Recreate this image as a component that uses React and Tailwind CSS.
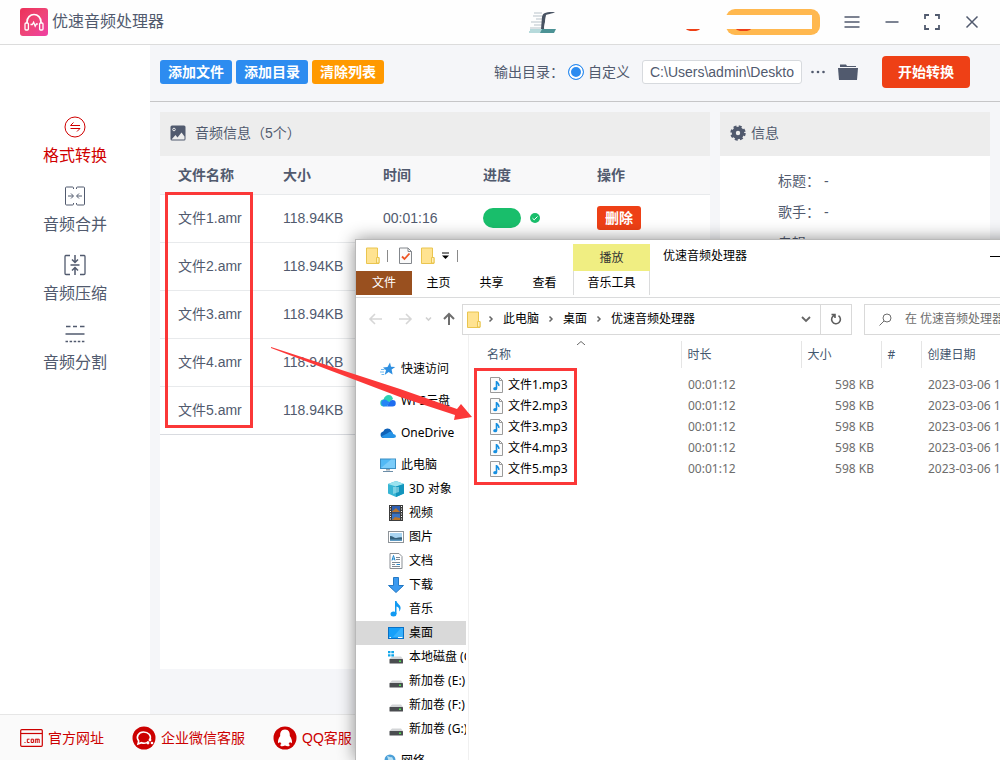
import React, { useState } from 'react';

const sideMenu = [
  { id: 'convert', label: '格式转换' },
  { id: 'merge', label: '音频合并' },
  { id: 'compress', label: '音频压缩' },
  { id: 'split', label: '音频分割' }
];

const sourceFiles = ['文件1.amr', '文件2.amr', '文件3.amr', '文件4.amr', '文件5.amr'];
const outputFiles = ['文件1.mp3', '文件2.mp3', '文件3.mp3', '文件4.mp3', '文件5.mp3'];

const navTop = [
  { icon: 'star', label: '快速访问' },
  { icon: 'wps', label: 'WPS云盘' },
  { icon: 'onedrive', label: 'OneDrive' }
];

const navPc = [
  { icon: 'cube', label: '3D 对象' },
  { icon: 'video', label: '视频' },
  { icon: 'picture', label: '图片' },
  { icon: 'document', label: '文档' },
  { icon: 'download', label: '下载' },
  { icon: 'music', label: '音乐' },
  { icon: 'desktop', label: '桌面', active: true },
  { icon: 'sysdisk', label: '本地磁盘 (C:)' },
  { icon: 'disk', label: '新加卷 (E:)' },
  { icon: 'disk', label: '新加卷 (F:)' },
  { icon: 'disk', label: '新加卷 (G:)' }
];

const AppLogo = () => (
  <svg className="size-7" viewBox="0 0 28 28" fill="none">
    <defs>
      <linearGradient id="logoBg" x1="0" y1="0" x2="1" y2="1">
        <stop offset="0" stopColor="#ec3059" />
        <stop offset="0.5" stopColor="#ee4577" />
        <stop offset="1" stopColor="#ef3fa5" />
      </linearGradient>
    </defs>
    <rect width="28" height="28" rx="3" fill="url(#logoBg)" />
    <path d="M7 15v-1a7 7.5 0 0 1 14 0v1" stroke="#fff" strokeWidth="1.7" />
    <rect x="5" y="15" width="3.4" height="7" rx="1" stroke="#fff" strokeWidth="1.3" />
    <rect x="19.6" y="15" width="3.4" height="7" rx="1" stroke="#fff" strokeWidth="1.3" />
    <path d="M10.5 16.5h1.8l1.3-2.3 1.6 4 1.2-2.2h1.4" stroke="#fff" strokeWidth="1.3" />
  </svg>
);

const SideIcon = ({ id }) => (
  <svg className="size-[22px]" viewBox="0 0 22 22" fill="none" stroke="currentColor">
    {id === 'convert' && (
      <>
        <circle cx="11" cy="11" r="10" />
        <path d="M16 9.5H6.500L9.500 6.500M6.500 12.500h9.500L13 15.500" />
      </>
    )}
    {id === 'merge' && (
      <>
        <path d="M9.500 4V3q0-1-1-1H2.500q-1 0-1 1v16q0 1 1 1h6q1 0 1-1v-1M12.500 4V3q0-1 1-1h6q1 0 1 1v16q0 1-1 1h-6q-1 0-1-1v-1" />
        <path d="M4 11h5M7 8.500 9.500 11 7 13.500M18 11h-5M15 8.500 12.500 11l2.500 2.500" />
      </>
    )}
    {id === 'compress' && (
      <>
        <path d="M6 1.500H2q-1 0-1 1v17q0 1 1 1h4M16 1.500h4q1 0 1 1v17q0 1-1 1h-4" strokeWidth="1.300" />
        <path d="M6.500 11h9M11 1v7M8 5.500l3 3 3-3M11 21v-7M8 16.500l3-3 3 3" strokeWidth="1.500" />
      </>
    )}
    {id === 'split' && (
      <>
        <path d="M2 3.500h4.500M9 3.500h4M16 3.500h4.500" strokeWidth="1.500" />
        <path d="M1.500 11h19" strokeWidth="1.500" />
        <path d="M1.500 18.500h19" strokeWidth="1.500" strokeDasharray="2.500 1.600" />
      </>
    )}
  </svg>
);

const FolderIcon = () => (
  <svg className="h-[17px] w-[14px] shrink-0" viewBox="0 0 14 17">
    <path d="M.5 1h11v9.500h1.500v6H.5z" fill="#ffe391" stroke="#eac54f" />
    <path d="M10.500 16v-5.500h2.500V16z" fill="#fff0b8" stroke="#eac54f" />
  </svg>
);

const DocCheckIcon = () => (
  <svg className="h-[17px] w-[13px]" viewBox="0 0 13 17" fill="none">
    <path d="M.5 1h8.500l3.500 3.500v12H.5z" fill="#fafafa" stroke="#83878c" />
    <path d="M9 1v3.500h3.500" stroke="#83878c" />
    <path d="m3 9.500 2.500 2.500 5-5.500" stroke="#ee5524" strokeWidth="1.800" />
  </svg>
);

const MusicFileIcon = () => (
  <svg className="h-4 w-[13px] shrink-0" viewBox="0 0 13 16" fill="none">
    <path d="M.5.500h9l3 3v12H.5z" fill="#fbfbfb" stroke="#9b9b9b" />
    <path d="M9.500.500v3h3" stroke="#9b9b9b" />
    <path d="M6.500 4v7.500M6.500 4c.3 2 3 2.200 2.300 5" stroke="#168fe0" strokeWidth="1.600" />
    <ellipse cx="5.200" cy="11.700" rx="2" ry="1.600" fill="#168fe0" />
  </svg>
);

const NavIcon = ({ name }) => (
  <svg className="size-4 shrink-0" viewBox="0 0 16 16" fill="none">
    {name === 'star' && (
      <>
        <path d="m10 1.500 1 4.200 4.300.2-3.700 2.700 1 5-4-2.500-4 3 1.400-4.900L3 6.500l4.500-.6z" fill="#2e8fe0" />
        <path d="M1 8.500h3.500M0 11h4M1.500 13.500H4" stroke="#6bb7ee" />
      </>
    )}
    {name === 'wps' && (
      <>
        <path d="M4 13.500a3.500 3.500 0 0 1-.5-7C4.300 3.500 6.500 2 8.500 2c3 0 4 2 4.500 4z" fill="#2ed3b5" />
        <path d="M4 13.500a3.600 3.600 0 0 1 0-7c3 0 4 2 5.500 3L7 13.500z" fill="#2486f5" />
        <path d="M7 13.500c1-1 2-6.500 5.500-6.500a3.200 3.200 0 0 1 0 6.500z" fill="#1f6df0" />
      </>
    )}
    {name === 'onedrive' && (
      <>
        <path d="M3.500 13a3.300 3.300 0 0 1-.3-6.500A4.600 4.600 0 0 1 11.500 6L14 11l-3 2z" fill="#0f62b8" />
        <path d="M4 13 1 11.500 8 8c1.500-2 5-1.500 5.200 1q2.800.5 2.800 2.200 0 1.800-2.500 1.800z" fill="#2592e6" />
      </>
    )}
    {name === 'pc' && (
      <>
        <rect x=".5" y="2" width="15" height="9.500" fill="#52b9f5" stroke="#3c8fc4" />
        <path d="M1 11 11 2.500h4v8.500z" fill="#7bccf9" />
        <path d="M6 12h4v1.500H6z" fill="#9aa7b1" />
        <path d="M3 14.500h10" stroke="#6b8da8" />
      </>
    )}
    {name === 'cube' && (
      <>
        <path d="m0 3 8-3 8 3v9.500L8 16l-8-3.500z" fill="#37b5d4" />
        <path d="m0 3 8-3 8 3-8 2.500z" fill="#9be3ef" />
        <path d="m8 5.500 8-2.500v9.500L8 16z" fill="#1295bd" />
        <path d="M5 6v7l6-2V6z" fill="#c1eff5" opacity=".5" />
      </>
    )}
    {name === 'video' && (
      <>
        <rect x="1" y="0" width="14" height="16" fill="#3c3c3c" />
        <rect x="4" y="1" width="8" height="6.500" fill="#2d5fb4" />
        <rect x="4" y="8.500" width="8" height="6.500" fill="#3a74c4" />
        <path d="M4 6.500 8 3l4 4H4zM4 15l3-3 5 1v2z" fill="#b9752c" />
        <path d="M2.500 1v15M13.500 1v15" stroke="#fff" strokeDasharray="1 1.500" />
      </>
    )}
    {name === 'picture' && (
      <>
        <rect x=".5" y="2.500" width="15" height="11" fill="#fff" stroke="#8e9499" />
        <rect x="2" y="4" width="12" height="8" fill="#a9d5f2" />
        <path d="M2 7c3 0 4 2 6 2s4-1 6-.5V12H2z" fill="#34607b" />
        <path d="M2 10.500h12V12H2z" fill="#5e9ac2" />
      </>
    )}
    {name === 'document' && (
      <>
        <path d="M2 .5h9L14 3.500v12H2z" fill="#fff" stroke="#8a8f94" />
        <path d="M8 4.500h4M8 6.500h4M4 9.500h8M4 11.500h3M4 13.500h8" stroke="#7b8894" />
        <path d="m4 7.500 1.500-5L7 7.500M4 6h3M8.500 11.500H12" stroke="#2189cf" />
      </>
    )}
    {name === 'download' && <path d="M5.500.500h5v8h5L8 15.500.500 8.500h5z" fill="#3b9af0" stroke="#2378c4" />}
    {name === 'music' && (
      <>
        <path d="M7 0h1.500c.5 3 5 4 4 8-.3 1.200-.8 2-1.300 2.500.5-3-.7-4.500-2.700-5v7.500H7z" fill="#119af2" />
        <ellipse cx="5.500" cy="13" rx="3" ry="2.500" fill="#119af2" />
      </>
    )}
    {name === 'desktop' && (
      <>
        <rect x=".5" y="2.500" width="15" height="11" fill="#16a0fa" stroke="#0a70c4" />
        <path d="M5 12 13 3h2v9z" fill="#36b0fc" />
        <path d="M1.500 12.500H3M10 12.500h4.500" stroke="#fff" />
      </>
    )}
    {(name === 'disk' || name === 'sysdisk') && (
      <>
        <path d="m3 8.500 1-1h9l2 2.500H1.500z" fill="#d3d5d7" />
        <rect x="1.500" y="10" width="13.500" height="4.500" rx=".5" fill="#4a4d50" />
        <rect x="11" y="11.500" width="2" height="1.500" fill="#4ee04e" />
      </>
    )}
    {name === 'sysdisk' && <path d="M0 2h2.500v2.300H0zM3.300 2H6v2.300H3.300zM0 5.200h2.500v2.300H0zM3.300 5.200H6v2.300H3.300z" fill="#12a7ea" />}
    {name === 'network' && (
      <>
        <circle cx="10" cy="7" r="5.500" fill="#4b9fd8" />
        <path d="M7 3c2 0 3 2 5 1l2 4-5 1z" fill="#b9e0f2" />
        <path d="m0 9 6-2v8l-6-1.500z" fill="#3273ad" />
      </>
    )}
  </svg>
);

const PathSep = () => (
  <svg className="h-2 w-[6px] shrink-0" viewBox="0 0 6 8" fill="none" stroke="#666" strokeWidth="1.500">
    <path d="m1.500 1.500 2.500 2.500-2.500 2.500" />
  </svg>
);

const TitleBar = () => (
  <header className="flex h-[45px] shrink-0 items-center border-b border-[#dcdcdc] bg-[#fefefe] pl-5">
    <AppLogo />
    <h1 className="ml-1 text-base">优速音频处理器</h1>
    <div className="ml-auto flex items-center">
      <svg className="h-6 w-[30px]" viewBox="0 0 30 24" fill="none">
        <path d="M6 3h8M5 6h9M8 9h6M3 12h11M6 15h8M2 18h11" stroke="#b8c2c9" />
        <path d="M14 7c1-5 5-5 13-5-3 2-8 2-9 3l-2 14h-3z" fill="#485362" />
        <path d="M18 6h12v12H16z" fill="#fefefe" />
        <path d="M2 20h24M1 22h25" stroke="#6fb5b8" />
        <path d="M14 19h14l-2 4H12z" fill="#4c9295" />
      </svg>
      <svg className="ml-[126px] h-[26px] w-[136px]" viewBox="0 0 136 26">
        <path d="M1 19h16q-2 3-5 3H6q-3 0-5-3z" fill="#ee4016" />
        <rect x="42" width="94" height="26" rx="9" fill="#ffb84f" />
        <path d="M51 19h17q-2 3-5 3h-7q-3 0-5-3z" fill="#ee4016" />
        <path d="M0 6h128v14H0z" fill="#fefefe" />
      </svg>
    </div>
    <div className="ml-3 mr-2 flex">
      <button aria-label="菜单" className="grid size-10 place-items-center">
        <svg className="size-4" viewBox="0 0 16 16" stroke="currentColor" strokeWidth="1.400"><path d="M.5 3h15M.5 8h15M.5 13h15" /></svg>
      </button>
      <button aria-label="最小化" className="grid size-10 place-items-center">
        <svg className="size-4" viewBox="0 0 16 16" stroke="currentColor" strokeWidth="1.500"><path d="M1.500 8h13" /></svg>
      </button>
      <button aria-label="最大化" className="grid size-10 place-items-center">
        <svg className="size-4" viewBox="0 0 16 16" fill="none" stroke="currentColor" strokeWidth="1.800"><path d="M1 5V1h4M11 1h4v4M15 11v4h-4M5 15H1v-4" /></svg>
      </button>
      <button aria-label="关闭" className="grid size-10 place-items-center">
        <svg className="size-4" viewBox="0 0 16 16" stroke="currentColor" strokeWidth="1.500"><path d="m2.500 2.500 11 11M13.500 2.500l-11 11" /></svg>
      </button>
    </div>
  </header>
);

const Sidebar = ({ current, onSelect }) => (
  <nav className="flex w-[150px] shrink-0 flex-col items-center gap-[17px] bg-white pt-[71px]">
    {sideMenu.map((item) => (
      <button
        key={item.id}
        onClick={() => onSelect(item.id)}
        className={`flex flex-col items-center gap-[6px] text-base leading-6 ${current === item.id ? 'text-[#d00000]' : ''}`}
      >
        <SideIcon id={item.id} />
        {item.label}
      </button>
    ))}
  </nav>
);

const Toolbar = () => (
  <div className="flex h-[57px] shrink-0 items-center border-b border-[#c6c6c8] pb-[2px] pl-[10px] pr-[30px] text-sm">
    <div className="flex gap-1 font-bold leading-6 text-white">
      <button className="rounded-[3px] bg-[#2d8cf0] px-2">添加文件</button>
      <button className="rounded-[3px] bg-[#2d8cf0] px-2">添加目录</button>
      <button className="rounded-[3px] bg-[#ff9900] px-2">清除列表</button>
    </div>
    <span className="ml-auto">输出目录：</span>
    <label className="ml-1 flex items-center gap-1">
      <input
        type="radio"
        name="output"
        defaultChecked
        className="size-4 appearance-none rounded-full border border-[#2d8cf0] bg-[#2d8cf0] ring-2 ring-inset ring-white"
      />
      自定义
    </label>
    <input
      type="text"
      aria-label="输出目录"
      defaultValue="C:\Users\admin\Deskto"
      className="ml-3 h-6 w-40 rounded-[3px] border border-[#d7dade] bg-white px-[7px]"
    />
    <button aria-label="更多" className="ml-2">
      <svg className="size-4" viewBox="0 0 16 16" fill="currentColor"><circle cx="2.500" cy="8" r="1.300" /><circle cx="8" cy="8" r="1.300" /><circle cx="13.500" cy="8" r="1.300" /></svg>
    </button>
    <button aria-label="打开目录" className="ml-3">
      <svg className="h-[18px] w-5" viewBox="0 0 20 18" fill="currentColor">
        <path d="M2 4V1.500h6l1 1.500h9V4z" />
        <path d="M0 5h20l-1 12H1z" />
      </svg>
    </button>
    <button className="ml-6 h-8 w-[88px] rounded bg-[#ee4016] font-bold text-white">开始转换</button>
  </div>
);

const SourcePanel = () => (
  <section className="min-w-0 flex-1 bg-white">
    <h2 className="flex h-11 items-center gap-[9px] bg-[#ededed] pb-[2px] pl-[10px] text-sm">
      <svg className="size-4" viewBox="0 0 16 16">
        <rect x=".5" y=".5" width="15" height="15" rx="1.500" fill="#515a6e" />
        <circle cx="4" cy="4.500" r="1.300" fill="none" stroke="#ededed" />
        <path d="m1.500 14.500 4-4.500 2 2.500 4-5 3 4v3z" fill="#ededed" />
      </svg>
      音频信息（5个）
    </h2>
    <table className="w-full table-fixed text-left text-sm">
      <thead>
        <tr className="h-[38px] border-b border-[#e8eaec] bg-[#f8f8f9]">
          <th className="w-[105px] pl-[18px]">文件名称</th>
          <th className="w-[100px] pl-[18px]">大小</th>
          <th className="w-[100px] pl-[18px]">时间</th>
          <th className="w-[114px] pl-[18px]">进度</th>
          <th className="pl-[18px]">操作</th>
        </tr>
      </thead>
      <tbody>
        {sourceFiles.map((name) => (
          <tr key={name} className="h-12 border-b border-[#e8eaec] last:border-[#d9dbe0]">
            <td className="pl-[18px]">{name}</td>
            <td className="pl-[18px]">118.94KB</td>
            <td className="pl-[18px]">00:01:16</td>
            <td className="pl-[18px]">
              <div className="flex items-center gap-[9px]">
                <span className="h-5 w-[38px] rounded-full bg-[#19be6b]" />
                <svg className="size-[10px]" viewBox="0 0 10 10" fill="none">
                  <circle cx="5" cy="5" r="5" fill="#19be6b" />
                  <path d="m2.500 5.200 1.700 1.600 3.300-3.300" stroke="#fff" />
                </svg>
              </div>
            </td>
            <td className="pl-[18px]">
              <button className="block rounded-[3px] bg-[#ee4016] px-2 font-bold leading-6 text-white">删除</button>
            </td>
          </tr>
        ))}
      </tbody>
    </table>
  </section>
);

const InfoPanel = () => (
  <section className="w-[270px] shrink-0 bg-white text-sm">
    <h2 className="flex h-11 items-center gap-[5px] bg-[#ededed] pb-[2px] pl-[10px]">
      <svg className="size-4" viewBox="0 0 16 16" fill="none" stroke="#515a6e">
        <circle cx="8" cy="8" r="4.200" strokeWidth="4" />
        <circle cx="8" cy="8" r="6.500" strokeWidth="2.400" strokeDasharray="2.900 2.200" />
      </svg>
      信息
    </h2>
    <dl className="grid grid-cols-[auto_1fr] gap-x-1 pl-[58px] pt-[10px] leading-[31px]">
      <dt>标题：</dt>
      <dd>-</dd>
      <dt>歌手：</dt>
      <dd>-</dd>
      <dt>专辑：</dt>
      <dd>-</dd>
    </dl>
  </section>
);

const Footer = () => (
  <footer className="flex h-[46px] shrink-0 items-center gap-7 border-t border-[#e6e6e6] bg-[#fafafa] pl-5 text-sm text-[#cc0000]">
    <a href="#site" className="flex items-center gap-[5px]">
      <svg className="h-[18px] w-[23px]" viewBox="0 0 23 18" fill="none" stroke="currentColor">
        <rect x=".7" y=".7" width="21.600" height="16.600" rx="1" strokeWidth="1.200" />
        <path d="M1 4.500h21" strokeWidth="1.200" />
        <path d="M4.500 13.500h1M9.500 10.200H7.300v3.300h2.200M11.200 10.200h2.200v3.300h-2.200zM15.300 14v-3.800h3.900V14M17.200 10.200V14" />
      </svg>
      官方网址
    </a>
    <a href="#wechat" className="flex items-center gap-[5px]">
      <svg className="size-6" viewBox="0 0 24 24" fill="none">
        <circle cx="12" cy="12" r="11.500" fill="currentColor" />
        <path d="M16.500 15.500c-2 1.700-5 2-7 1.200L6 18l.7-3C3.500 11 6.500 6 11.500 6s8 3.500 6.500 7.500" stroke="#fff" strokeWidth="1.600" />
        <circle cx="18" cy="14" r="1.400" fill="#fff" />
        <circle cx="16" cy="17" r="1.400" fill="#fff" />
        <circle cx="20" cy="17" r="1.300" fill="#fff" />
      </svg>
      企业微信客服
    </a>
    <a href="#qq" className="flex items-center gap-[5px]">
      <svg className="size-6" viewBox="0 0 24 24">
        <circle cx="12" cy="12" r="11.500" fill="currentColor" />
        <path d="M12 3.500c-4 0-5 3-4.800 6.500C5.500 12.500 4.500 15 5.200 17c.5.500 1.200-.3 1.800-1.200.3 1 .8 1.700 1.500 2.300-1 .4-1.500 1-1 1.600.8.800 3.300.6 4.500-.3 1.200.9 3.700 1.100 4.500.3.500-.6 0-1.200-1-1.600.7-.6 1.200-1.300 1.500-2.300.6.900 1.300 1.700 1.800 1.200.7-2-.3-4.500-2-7C17 6.500 16 3.500 12 3.500z" fill="#fff" />
      </svg>
      QQ客服
    </a>
  </footer>
);

const NavItem = ({ icon, label, active, nested }) => (
  <div className={`mr-[2px] flex h-6 items-center gap-[5px] overflow-hidden whitespace-nowrap ${nested ? 'pl-8' : 'pl-6'} ${active ? 'bg-[#d9d9d9]' : ''}`}>
    <NavIcon name={icon} />
    {label}
  </div>
);

const Explorer = () => (
  <section className="absolute -right-10 bottom-0 left-[355px] top-[239px] flex flex-col overflow-hidden border-l border-t border-[#b9b9b9] bg-white font-['Noto_Sans','Noto_Sans_CJK_SC',sans-serif] text-xs text-black shadow-[0_0_16px_rgba(0,0,0,0.45)]">
    <div className="flex h-[58px] shrink-0 border-b border-[#dadbdc]">
      <div className="flex w-[217px] flex-col">
        <div className="flex h-[31px] items-center pl-[10px]">
          <FolderIcon />
          <span className="ml-[7px] h-3 w-px bg-[#8a8a8a]" />
          <span className="ml-[11px]"><DocCheckIcon /></span>
          <span className="ml-[9px]"><FolderIcon /></span>
          <svg className="ml-[6px] h-2 w-[9px]" viewBox="0 0 9 8"><path d="M1 1h7" stroke="#000" /><path d="M1 3.500h7L4.500 7z" /></svg>
          <span className="ml-[7px] h-3 w-px bg-[#8a8a8a]" />
        </div>
        <div className="flex h-6 items-center">
          <button className="h-6 w-14 bg-[#99501f] text-white">文件</button>
          <button className="h-6 w-[53px]">主页</button>
          <button className="h-6 w-[53px]">共享</button>
          <button className="h-6 w-[53px]">查看</button>
        </div>
      </div>
      <div className="flex w-[77px] flex-col pt-1 text-center">
        <div className="h-[27px] bg-[#f0ee82] leading-[27px] text-[#333]">播放</div>
        <button className="h-6 border-x border-[#dadbdc]">音乐工具</button>
      </div>
      <div className="flex h-8 flex-1 items-center justify-between pl-[13px]">
        <span>优速音频处理器</span>
        <svg className="mr-9 h-px w-[14px]" viewBox="0 0 14 1"><path d="M0 .5h14" stroke="#000" /></svg>
      </div>
    </div>

    <div className="flex h-[37px] shrink-0 items-center pl-3 pt-[5px]">
      <svg className="h-4 w-[88px] shrink-0" viewBox="0 0 88 16" fill="none" strokeWidth="1.600">
        <path d="M14 8H2M7 3 2 8l5 5M31 8h12M38 3l5 5-5 5" stroke="#d6d6d6" />
        <path d="m58 6.500 2.500 2.500L63 6.500" stroke="#d0d0d0" />
        <path d="M81 14V3M76 8l5-5 5 5" stroke="#6e6e6e" strokeWidth="2" />
      </svg>
      <div className="ml-[6px] flex h-[31px] w-[390px] shrink-0 items-center border border-[#d9d9d9] pl-1">
        <FolderIcon />
        <span className="ml-[7px] flex items-center gap-[9px]">
          <PathSep />
          <span>此电脑</span>
          <PathSep />
          <span>桌面</span>
          <PathSep />
          <span>优速音频处理器</span>
        </span>
        <svg className="ml-auto mr-[9px] h-2 w-[10px]" viewBox="0 0 10 8" fill="none" stroke="#666" strokeWidth="1.800"><path d="m1 2 4 4 4-4" /></svg>
        <button aria-label="刷新" className="grid h-full w-[31px] place-items-center border-l border-[#d9d9d9]">
          <svg className="size-3" viewBox="0 0 12 12" fill="none" stroke="#5e5e5e" strokeWidth="1.600"><path d="M4.500 2.200a4.400 4.400 0 1 0 4 .5M1.500 1.500H5V5" /></svg>
        </button>
      </div>
      <label className="ml-3 flex h-[31px] min-w-0 flex-1 items-center gap-[13px] border border-[#d9d9d9] pl-[14px]">
        <svg className="size-[13px] shrink-0" viewBox="0 0 13 13" fill="none" stroke="#6d6d6d"><circle cx="8" cy="5" r="4" /><path d="M5 8 .5 12.500" /></svg>
        <input type="text" aria-label="搜索" placeholder="在 优速音频处理器" className="min-w-0 flex-1 outline-none placeholder:text-[#6d6d6d]" />
      </label>
    </div>

    <div className="flex min-h-0 flex-1">
      <ul className="w-[113px] shrink-0 border-r border-[#f0f0f0] pt-[22px]">
        {navTop.map((item) => (
          <li key={item.label} className="mb-2">
            <NavItem {...item} />
          </li>
        ))}
        <li>
          <NavItem icon="pc" label="此电脑" />
        </li>
        {navPc.map((item) => (
          <li key={item.label}>
            <NavItem {...item} nested />
          </li>
        ))}
        <li className="mt-2">
          <NavItem icon="network" label="网络" />
        </li>
      </ul>

      <div className="min-w-0 flex-1 pt-[10px]">
        <svg className="-mt-1 ml-[108px] h-1 w-2" viewBox="0 0 8 4" fill="none" stroke="#666"><path d="m0 4 4-3.500L8 4" /></svg>
        <table className="-mt-1 w-full table-fixed whitespace-nowrap text-left text-[#6d6d6d]">
          <thead className="text-[#43566e]">
            <tr className="h-[27px]">
              <th className="w-[212px] pl-[18px] font-normal">名称</th>
              <th className="w-[120px] border-l border-[#e5e5e5] pl-[6px] font-normal">时长</th>
              <th className="w-20 border-l border-[#e5e5e5] pl-[6px] font-normal">大小</th>
              <th className="w-10 border-l border-[#e5e5e5] pl-[6px] font-normal">#</th>
              <th className="border-l border-[#e5e5e5] pl-[6px] font-normal">创建日期</th>
            </tr>
          </thead>
          <tbody className="before:block before:h-[6px]">
            {outputFiles.map((name) => (
              <tr key={name} className="h-[21px]">
                <td className="pl-[21px] text-black">
                  <span className="flex items-center gap-[5px]">
                    <MusicFileIcon />
                    {name}
                  </span>
                </td>
                <td className="pl-[7px]">00:01:12</td>
                <td className="pr-[7px] text-right">598 KB</td>
                <td />
                <td className="pl-[7px]">2023-03-06 17:12</td>
              </tr>
            ))}
          </tbody>
        </table>
      </div>
    </div>
  </section>
);

const App = () => {
  const [current, setCurrent] = useState('convert');

  return (
    <div className="relative flex h-screen flex-col overflow-hidden bg-[#f5f6f9] font-['Liberation_Sans','Noto_Sans_CJK_SC',sans-serif] text-[#515a6e]">
      <TitleBar />
      <div className="flex min-h-0 flex-1">
        <Sidebar current={current} onSelect={setCurrent} />
        <main className="flex min-w-0 flex-1 flex-col">
          <Toolbar />
          <div className="flex min-h-0 flex-1 gap-[10px] px-[10px] pb-[45px] pt-[10px]">
            <SourcePanel />
            <InfoPanel />
          </div>
        </main>
      </div>
      <Footer />

      <Explorer />

      {/* callouts drawn over both windows */}
      <div className="pointer-events-none absolute left-[165px] top-[192px] h-[236px] w-[88px] border-3 border-[#fb3838]" />
      <div className="pointer-events-none absolute left-[474px] top-[368px] h-[117px] w-[103px] border-3 border-[#fb3838]" />
      <svg className="pointer-events-none absolute left-[271px] top-[347px] h-[74px] w-[201px]" viewBox="0 0 201 74">
        <path d="M0 0 129 42l57 20 4-5 11 13-18 3 1-5-55-18L0 1z" fill="#fb3838" />
      </svg>
    </div>
  );
};

export default App;
